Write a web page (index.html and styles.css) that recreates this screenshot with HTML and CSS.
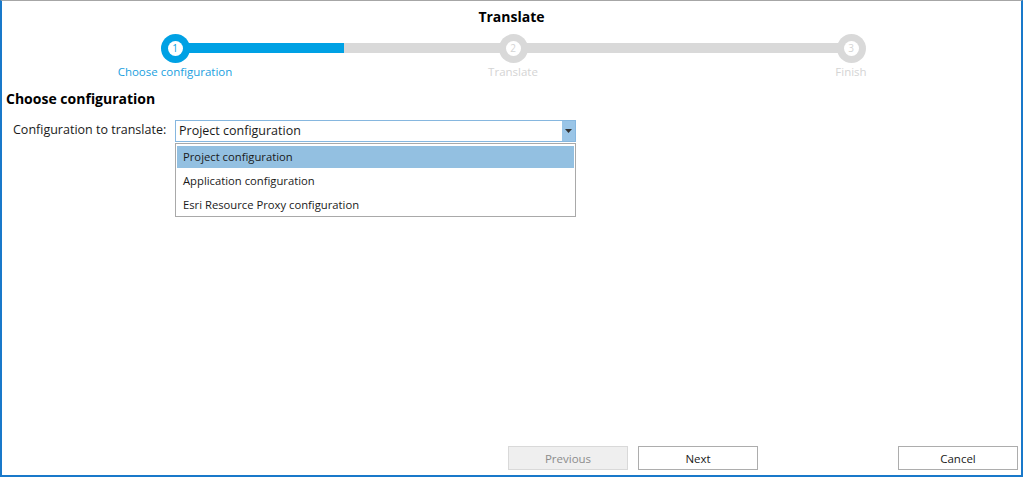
FILE: index.html
```html
<!DOCTYPE html>
<html>
<head>
<meta charset="utf-8">
<link rel="stylesheet" href="styles.css">
</head>
<body>
<div class="window">
  <div class="title">Translate</div>
  <div class="stepper">
    <div class="step active">
      <div class="track"><span class="seg none"></span><span class="dot"><span class="num">1</span></span><span class="seg done"></span></div>
      <div class="label">Choose configuration</div>
    </div>
    <div class="step">
      <div class="track"><span class="seg"></span><span class="dot"><span class="num">2</span></span><span class="seg"></span></div>
      <div class="label">Translate</div>
    </div>
    <div class="step">
      <div class="track"><span class="seg"></span><span class="dot"><span class="num">3</span></span><span class="seg none"></span></div>
      <div class="label">Finish</div>
    </div>
  </div>
  <div class="content">
    <h2 class="heading">Choose configuration</h2>
    <div class="row">
      <div class="field-label">Configuration to translate:</div>
      <div class="combo-wrap">
        <div class="combo">
          <span class="combo-text">Project configuration</span>
          <span class="combo-btn"><svg width="7" height="4" viewBox="0 0 7 4"><path d="M0 0H7L3.5 4Z" fill="#333"/></svg></span>
        </div>
        <div class="list">
          <div class="item selected">Project configuration</div>
          <div class="item">Application configuration</div>
          <div class="item">Esri Resource Proxy configuration</div>
        </div>
      </div>
    </div>
  </div>
  <div class="footer">
    <button class="btn disabled">Previous</button>
    <button class="btn">Next</button>
    <span class="spacer"></span>
    <button class="btn">Cancel</button>
  </div>
</div>
</body>
</html>
```
FILE: styles.css
```css
html, body {
  margin: 0;
  padding: 0;
  background: #ffffff;
}
body {
  font-family: "Open Sans", "Noto Sans", sans-serif;
  font-size: 11.5px;
  color: #1a1a1a;
}
.window {
  box-sizing: border-box;
  width: 1023px;
  height: 477px;
  border-top: 1px solid #a6a6a6;
  border-left: 2px solid #1979ca;
  border-right: 2px solid #1979ca;
  border-bottom: 2px solid #1979ca;
  display: flex;
  flex-direction: column;
}
.title {
  text-align: center;
  font-weight: 700;
  font-size: 14px;
  line-height: 18px;
  margin-top: 7px;
  color: #000;
}
.stepper {
  display: grid;
  grid-template-columns: 338px 338px 338px;
  margin-left: 4px;
  margin-top: 8px;
}
.step {
  display: flex;
  flex-direction: column;
  align-items: stretch;
}
.track {
  display: flex;
  align-items: center;
  height: 28px;
}
.seg {
  flex: 1;
  height: 10px;
  background: #d9d9d9;
}
.seg.none { background: transparent; }
.seg.done { background: #00a1e4; }
.dot {
  width: 29px;
  height: 29px;
  border-radius: 50%;
  background: #d9d9d9;
  display: flex;
  align-items: center;
  justify-content: center;
  margin: 0 -1px;
}
.step.active .dot { background: #00a1e4; }
.num {
  width: 15px;
  height: 15px;
  border-radius: 50%;
  background: #fff;
  color: #d4d4d4;
  font-size: 10px;
  line-height: 15px;
  text-align: center;
}
.step.active .num { color: #00a1e4; }
.label {
  text-align: center;
  color: #d4d4d4;
  font-size: 11.5px;
  line-height: 16px;
  margin-top: 2px;
}
.step.active .label { color: #1a9fe0; }
.content {
  padding: 0 0 0 4px;
}
.heading {
  margin: 9px 0 0 0;
  font-size: 14px;
  line-height: 20px;
  font-weight: 700;
  color: #000;
}
.row {
  display: flex;
  align-items: flex-start;
  margin-top: 11px;
}
.field-label {
  width: 162px;
  padding-left: 7px;
  line-height: 20px;
  font-size: 12.5px;
  color: #1a1a1a;
}
.combo-wrap {
  width: 401px;
}
.combo {
  box-sizing: border-box;
  height: 22px;
  border: 1px solid #86b7df;
  display: flex;
  align-items: stretch;
}
.combo-text {
  flex: 1;
  padding-left: 3px;
  line-height: 20px;
  font-size: 12.5px;
  color: #1a1a1a;
}
.combo-btn {
  width: 13px;
  background: #9ac5e7;
  display: flex;
  align-items: center;
  justify-content: center;
}
.list {
  box-sizing: border-box;
  margin-top: 1px;
  border: 1px solid #a9a9a9;
  padding: 2px 1px;
  height: 74px;
}
.item {
  height: 22px;
  line-height: 22px;
  margin-bottom: 2px;
  padding-left: 6px;
  font-size: 11.25px;
  color: #1a1a1a;
}
.item.selected { background: #93c0e1; }
.footer {
  margin-top: auto;
  display: flex;
  padding: 0 3px 5px 506px;
  gap: 10px;
}
.spacer { width: 120px; }
.btn {
  box-sizing: border-box;
  width: 120px;
  height: 24px;
  background: #fff;
  border: 1px solid #adadad;
  font-family: "Open Sans", "Noto Sans", sans-serif;
  font-size: 11.5px;
  color: #1a1a1a;
  padding: 0;
}
.btn.disabled {
  background: #efefef;
  border-color: #d9d9d9;
  color: #8c8c8c;
}
```
